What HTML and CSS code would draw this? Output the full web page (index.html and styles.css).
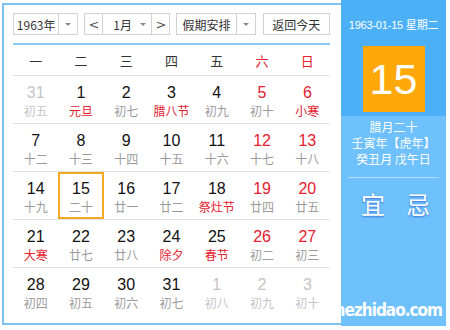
FILE: index.html
```html
<!DOCTYPE html>
<html>
<head>
    <title>万年历</title>
    <link rel="stylesheet" href="styles.css">
</head>
<body>
    <div class="widget">
        <div class="main">
            <div class="toolbar">
                <div class="box year-box">
                    <span class="label">1963年</span>
                    <span class="drop"><i class="tri"></i></span>
                </div>
                <div class="box month-box">
                    <span class="arrow">&lt;</span>
                    <span class="label month-label">1月 <i class="tri"></i></span>
                    <span class="arrow">&gt;</span>
                </div>
                <div class="box holiday-box">
                    <span class="label">假期安排</span>
                    <span class="drop"><i class="tri"></i></span>
                </div>
                <div class="box today-btn">返回今天</div>
            </div>

            <div class="week">
                <span>一</span><span>二</span><span>三</span><span>四</span><span>五</span>
                <span class="red">六</span><span class="red">日</span>
            </div>

            <div class="row">
                <div class="cell other"><b>31</b><em>初五</em></div>
                <div class="cell"><b>1</b><em class="red">元旦</em></div>
                <div class="cell"><b>2</b><em>初七</em></div>
                <div class="cell"><b>3</b><em class="red">腊八节</em></div>
                <div class="cell"><b>4</b><em>初九</em></div>
                <div class="cell"><b class="red">5</b><em>初十</em></div>
                <div class="cell"><b class="red">6</b><em class="red">小寒</em></div>
            </div>
            <div class="row">
                <div class="cell"><b>7</b><em>十二</em></div>
                <div class="cell"><b>8</b><em>十三</em></div>
                <div class="cell"><b>9</b><em>十四</em></div>
                <div class="cell"><b>10</b><em>十五</em></div>
                <div class="cell"><b>11</b><em>十六</em></div>
                <div class="cell"><b class="red">12</b><em>十七</em></div>
                <div class="cell"><b class="red">13</b><em>十八</em></div>
            </div>
            <div class="row">
                <div class="cell"><b>14</b><em>十九</em></div>
                <div class="cell today"><b>15</b><em>二十</em></div>
                <div class="cell"><b>16</b><em>廿一</em></div>
                <div class="cell"><b>17</b><em>廿二</em></div>
                <div class="cell"><b>18</b><em class="red">祭灶节</em></div>
                <div class="cell"><b class="red">19</b><em>廿四</em></div>
                <div class="cell"><b class="red">20</b><em>廿五</em></div>
            </div>
            <div class="row">
                <div class="cell"><b>21</b><em class="red">大寒</em></div>
                <div class="cell"><b>22</b><em>廿七</em></div>
                <div class="cell"><b>23</b><em>廿八</em></div>
                <div class="cell"><b>24</b><em class="red">除夕</em></div>
                <div class="cell"><b>25</b><em class="red">春节</em></div>
                <div class="cell"><b class="red">26</b><em>初二</em></div>
                <div class="cell"><b class="red">27</b><em>初三</em></div>
            </div>
            <div class="row last">
                <div class="cell"><b>28</b><em>初四</em></div>
                <div class="cell"><b>29</b><em>初五</em></div>
                <div class="cell"><b>30</b><em>初六</em></div>
                <div class="cell"><b>31</b><em>初七</em></div>
                <div class="cell other"><b>1</b><em>初八</em></div>
                <div class="cell other"><b>2</b><em>初九</em></div>
                <div class="cell other"><b>3</b><em>初十</em></div>
            </div>
        </div>

        <div class="side">
            <p class="side-date">1963-01-15 星期二</p>
            <div class="big-day">15</div>
            <div class="lunar-info">
                <p>腊月二十</p>
                <p>壬寅年【虎年】</p>
                <p>癸丑月 戊午日</p>
            </div>
            <div class="yiji">
                <span>宜</span>
                <span>忌</span>
            </div>
            <span class="mark">mezhidao.com</span>
        </div>
    </div>
</body>
</html>
```

FILE: styles.css
```css
body {
    margin: 0;
    background: #fff;
    font-family: "Liberation Sans", "Noto Sans CJK SC", sans-serif;
    color: #222;
}

.widget {
    display: flex;
    width: 446px;
}

.main {
    box-sizing: border-box;
    width: 339px;
    height: 322px;
    margin-top: 3px;
    margin-left: 2px;
    padding: 8px 11px 0 9px;
    border: 2px solid #7cc2f2;
    border-right: 0;
}

/* toolbar */
.toolbar {
    display: flex;
    height: 22px;
}

.box {
    box-sizing: border-box;
    display: flex;
    align-items: center;
    height: 22px;
    border: 1px solid #d2d2d2;
    background: #fff;
    font-family: "Noto Sans CJK SC", "Liberation Sans", sans-serif;
    font-size: 12px;
    color: #333;
}

.year-box { width: 66px; }
.month-box { width: 87px; margin-left: 6px; }
.holiday-box { width: 80px; margin-left: 6px; }
.today-btn { width: 68px; margin-left: 7px; justify-content: center; }

.label {
    flex: 1;
    text-align: center;
}

.drop {
    width: 18px;
    height: 100%;
    border-left: 1px solid #d2d2d2;
    display: flex;
    align-items: center;
    justify-content: center;
}

.tri {
    display: inline-block;
    width: 0;
    height: 0;
    border-left: 3px solid transparent;
    border-right: 3px solid transparent;
    border-top: 3px solid #888;
    vertical-align: middle;
}

.month-box .arrow {
    width: 17px;
    height: 100%;
    display: flex;
    align-items: center;
    justify-content: center;
    font-family: "DejaVu Sans", sans-serif;
    font-size: 13px;
    color: #555;
}
.month-box .arrow:first-child { border-right: 1px solid #d2d2d2; }
.month-box .arrow:last-child { border-left: 1px solid #d2d2d2; }

.month-label {
    display: flex;
    align-items: center;
    justify-content: space-between;
    padding: 0 5px 0 10px;
}

/* weekday header */
.week {
    display: grid;
    grid-template-columns: repeat(7, 1fr);
    margin-top: 8px;
    height: 30px;
    border-top: 2px solid #8ecbf2;
    border-bottom: 1px solid #e2e2e2;
    align-items: center;
    text-align: center;
    font-family: "Noto Sans CJK SC", sans-serif;
    font-size: 13px;
    color: #333;
}

/* day grid */
.row {
    display: grid;
    grid-template-columns: repeat(7, 1fr);
    height: 48px;
    box-sizing: border-box;
    border-bottom: 1px solid #e2e2e2;
}
.row.last { border-bottom: 0; }

.cell {
    box-sizing: border-box;
    display: flex;
    flex-direction: column;
    align-items: center;
    padding-top: 8px;
}

.cell b {
    font-weight: normal;
    font-size: 16px;
    line-height: 18px;
    color: #111;
}

.cell em {
    font-style: normal;
    font-family: "Noto Sans CJK SC", sans-serif;
    font-size: 12px;
    line-height: 17px;
    color: #9a9a9a;
}

.cell .red { color: #e5202e; }
.week .red { color: #e5202e; }

.cell.other b, .cell.other em { color: #c4c4c4; }

.cell.today {
    border: 2px solid #f3a823;
    padding-top: 6px;
}

/* side panel */
.side {
    position: relative;
    width: 105px;
    height: 326px;
    background: linear-gradient(#4cb0f6 0, #4cb0f6 116px, #6ec1fd 116px);
    color: #fff;
    text-align: center;
    font-family: "Noto Sans CJK SC", sans-serif;
}

.side-date {
    margin: 0;
    padding-top: 17px;
    font-family: "Liberation Sans", "Noto Sans CJK SC", sans-serif;
    font-size: 11px;
    letter-spacing: -0.2px;
    line-height: 16px;
}

.big-day {
    width: 62px;
    height: 66px;
    margin: 13px auto 0;
    background: #ffa80a;
    font-family: "Liberation Sans", sans-serif;
    font-size: 43px;
    line-height: 66px;
}

.lunar-info {
    margin: 7px 7px 0;
    padding-bottom: 10px;
    border-bottom: 1px solid rgba(255, 255, 255, 0.45);
}

.lunar-info p {
    margin: 0;
    font-size: 12px;
    line-height: 16px;
}

.yiji {
    display: flex;
    justify-content: space-between;
    margin-top: 12px;
    padding: 0 16px 0 20px;
    font-size: 24px;
    line-height: 28px;
    text-shadow: 0 1px 2px #3f6fd8;
}

.mark {
    position: absolute;
    right: 4px;
    bottom: 6px;
    font-family: "DejaVu Sans Condensed", "DejaVu Sans", sans-serif;
    font-weight: bold;
    font-size: 17px;
    letter-spacing: -1px;
    color: #fff;
}
```
